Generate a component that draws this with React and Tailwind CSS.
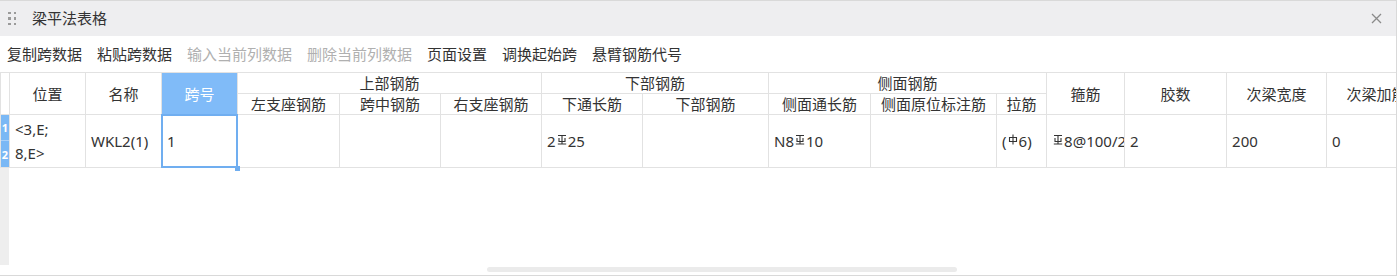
import React from "react";

const FONT = { fontFamily: '"Noto Sans", "Noto Sans CJK SC", sans-serif' };

// grade III rebar symbol
function G3() {
  return (
    <svg width="10" height="11" viewBox="0 0 10 11" className="inline-block align-[2px] mx-[1px]" fill="none" stroke="#333" strokeWidth="1.1">
      <path d="M1 1.5H9 M5 1.5V10 M2 4V7.5H8V4 M0.8 10H9.2" />
    </svg>
  );
}

// grade I rebar symbol
function G1() {
  return (
    <svg width="10" height="11" viewBox="0 0 10 11" className="inline-block align-[2px] mx-[1px]" fill="none" stroke="#333" strokeWidth="1.1">
      <path d="M5 0.5V10.5 M1.5 3.5H8.5V7.5H1.5Z" />
    </svg>
  );
}

const widths = [9, 76, 76, 76, 102, 101, 101, 101, 126, 102, 126, 50, 78, 102, 100, 100, 100];

const th = "border border-[#e2e2e2] font-normal text-[#333] text-center leading-[20px] p-0 whitespace-nowrap overflow-hidden";
const td = "border border-[#e2e2e2] text-[#333] text-left px-[5px] whitespace-nowrap overflow-hidden";

export default function App() {
  return (
    <div className="w-[1397px] h-[276px] bg-white overflow-hidden flex flex-col border-t border-r border-b border-[#d9d9d9] text-[15px]" style={FONT}>
      {/* TITLE BAR */}
      <div className="h-[35px] shrink-0 bg-[#eeeef0] flex items-center pl-[8px] pr-[14px]">
        <div className="grid grid-cols-2 gap-x-[3px] gap-y-[3px] w-[8px]">
          {Array.from({ length: 6 }).map((_, i) => (
            <span key={i} className="w-[2.5px] h-[2.5px] bg-[#9a9a9a]" />
          ))}
        </div>
        <span className="ml-[16px] text-[#333]">梁平法表格</span>
        <span className="ml-auto">
          <svg width="11" height="11" viewBox="0 0 11 11" stroke="#8a8a8a" strokeWidth="1.3">
            <path d="M1 1L10 10M10 1L1 10" />
          </svg>
        </span>
      </div>

      {/* TOOLBAR */}
      <div className="h-[36px] shrink-0 flex items-center gap-[15px] pl-[7px] text-[#333]">
        <span>复制跨数据</span>
        <span>粘贴跨数据</span>
        <span className="text-[#b0b0b0]">输入当前列数据</span>
        <span className="text-[#b0b0b0]">删除当前列数据</span>
        <span>页面设置</span>
        <span>调换起始跨</span>
        <span>悬臂钢筋代号</span>
      </div>

      {/* TABLE */}
      <div className="relative flex-1 overflow-hidden">
        <div className="absolute left-0 top-0 bottom-[10px] w-[9px] bg-[#eeeeee]" />
        <table className="relative table-fixed border-collapse" style={{ width: widths.reduce((a, b) => a + b, 0) }}>
          <colgroup>
            {widths.map((w, i) => (
              <col key={i} style={{ width: w }} />
            ))}
          </colgroup>
          <thead>
            <tr className="h-[21px]">
              <th rowSpan={2} className={`${th} bg-white`} />
              <th rowSpan={2} className={th}>位置</th>
              <th rowSpan={2} className={th}>名称</th>
              <th rowSpan={2} className={`${th} bg-[#80bbf8] text-white border-[#8cc2f8]`}>跨号</th>
              <th colSpan={3} className={th}>上部钢筋</th>
              <th colSpan={2} className={th}>下部钢筋</th>
              <th colSpan={3} className={th}>侧面钢筋</th>
              <th rowSpan={2} className={th}>箍筋</th>
              <th rowSpan={2} className={th}>胶数</th>
              <th rowSpan={2} className={th}>次梁宽度</th>
              <th rowSpan={2} className={th}>次梁加筋</th>
              <th rowSpan={2} className={th}></th>
            </tr>
            <tr className="h-[21px]">
              <th className={th}>左支座钢筋</th>
              <th className={th}>跨中钢筋</th>
              <th className={th}>右支座钢筋</th>
              <th className={th}>下通长筋</th>
              <th className={th}>下部钢筋</th>
              <th className={th}>侧面通长筋</th>
              <th className={th}>侧面原位标注筋</th>
              <th className={th}>拉筋</th>
            </tr>
          </thead>
          <tbody>
            <tr className="h-[53px]">
              <td className="border border-[#e2e2e2] p-0 bg-[#7ab8f5]">
                <div className="flex flex-col text-white text-[11px] font-bold leading-none">
                  <span className="h-[26px] flex items-center justify-center border-b border-[#a9d0f8]">1</span>
                  <span className="h-[26px] flex items-center justify-center">2</span>
                </div>
              </td>
              <td className={`${td} leading-[24px]`}>
                <div>&lt;3,E;</div>
                <div>8,E&gt;</div>
              </td>
              <td className={td}>WKL2(1)</td>
              <td className="relative border border-[#e2e2e2] p-0">
                <div className="absolute inset-[-1px] border-2 border-[#70aef0] flex items-center pl-[4px] text-[#333]">1</div>
                <span className="absolute right-[-3px] bottom-[-4px] w-[5px] h-[5px] bg-[#70aef0]" />
              </td>
              <td className={td}></td>
              <td className={td}></td>
              <td className={td}></td>
              <td className={td}>2<G3 />25</td>
              <td className={td}></td>
              <td className={td}>N8<G3 />10</td>
              <td className={td}></td>
              <td className={`${td} px-[3px]`}>(<G1 />6)</td>
              <td className={`${td} px-[3px]`}><G3 />8@100/200(2)</td>
              <td className={td}>2</td>
              <td className={td}>200</td>
              <td className={td}>0</td>
              <td className={td}></td>
            </tr>
          </tbody>
        </table>

        {/* SCROLLBAR */}
        <div className="absolute bottom-[3px] left-[487px] w-[470px] h-[5px] rounded-full bg-[#ebebeb]" />
      </div>
    </div>
  );
}
